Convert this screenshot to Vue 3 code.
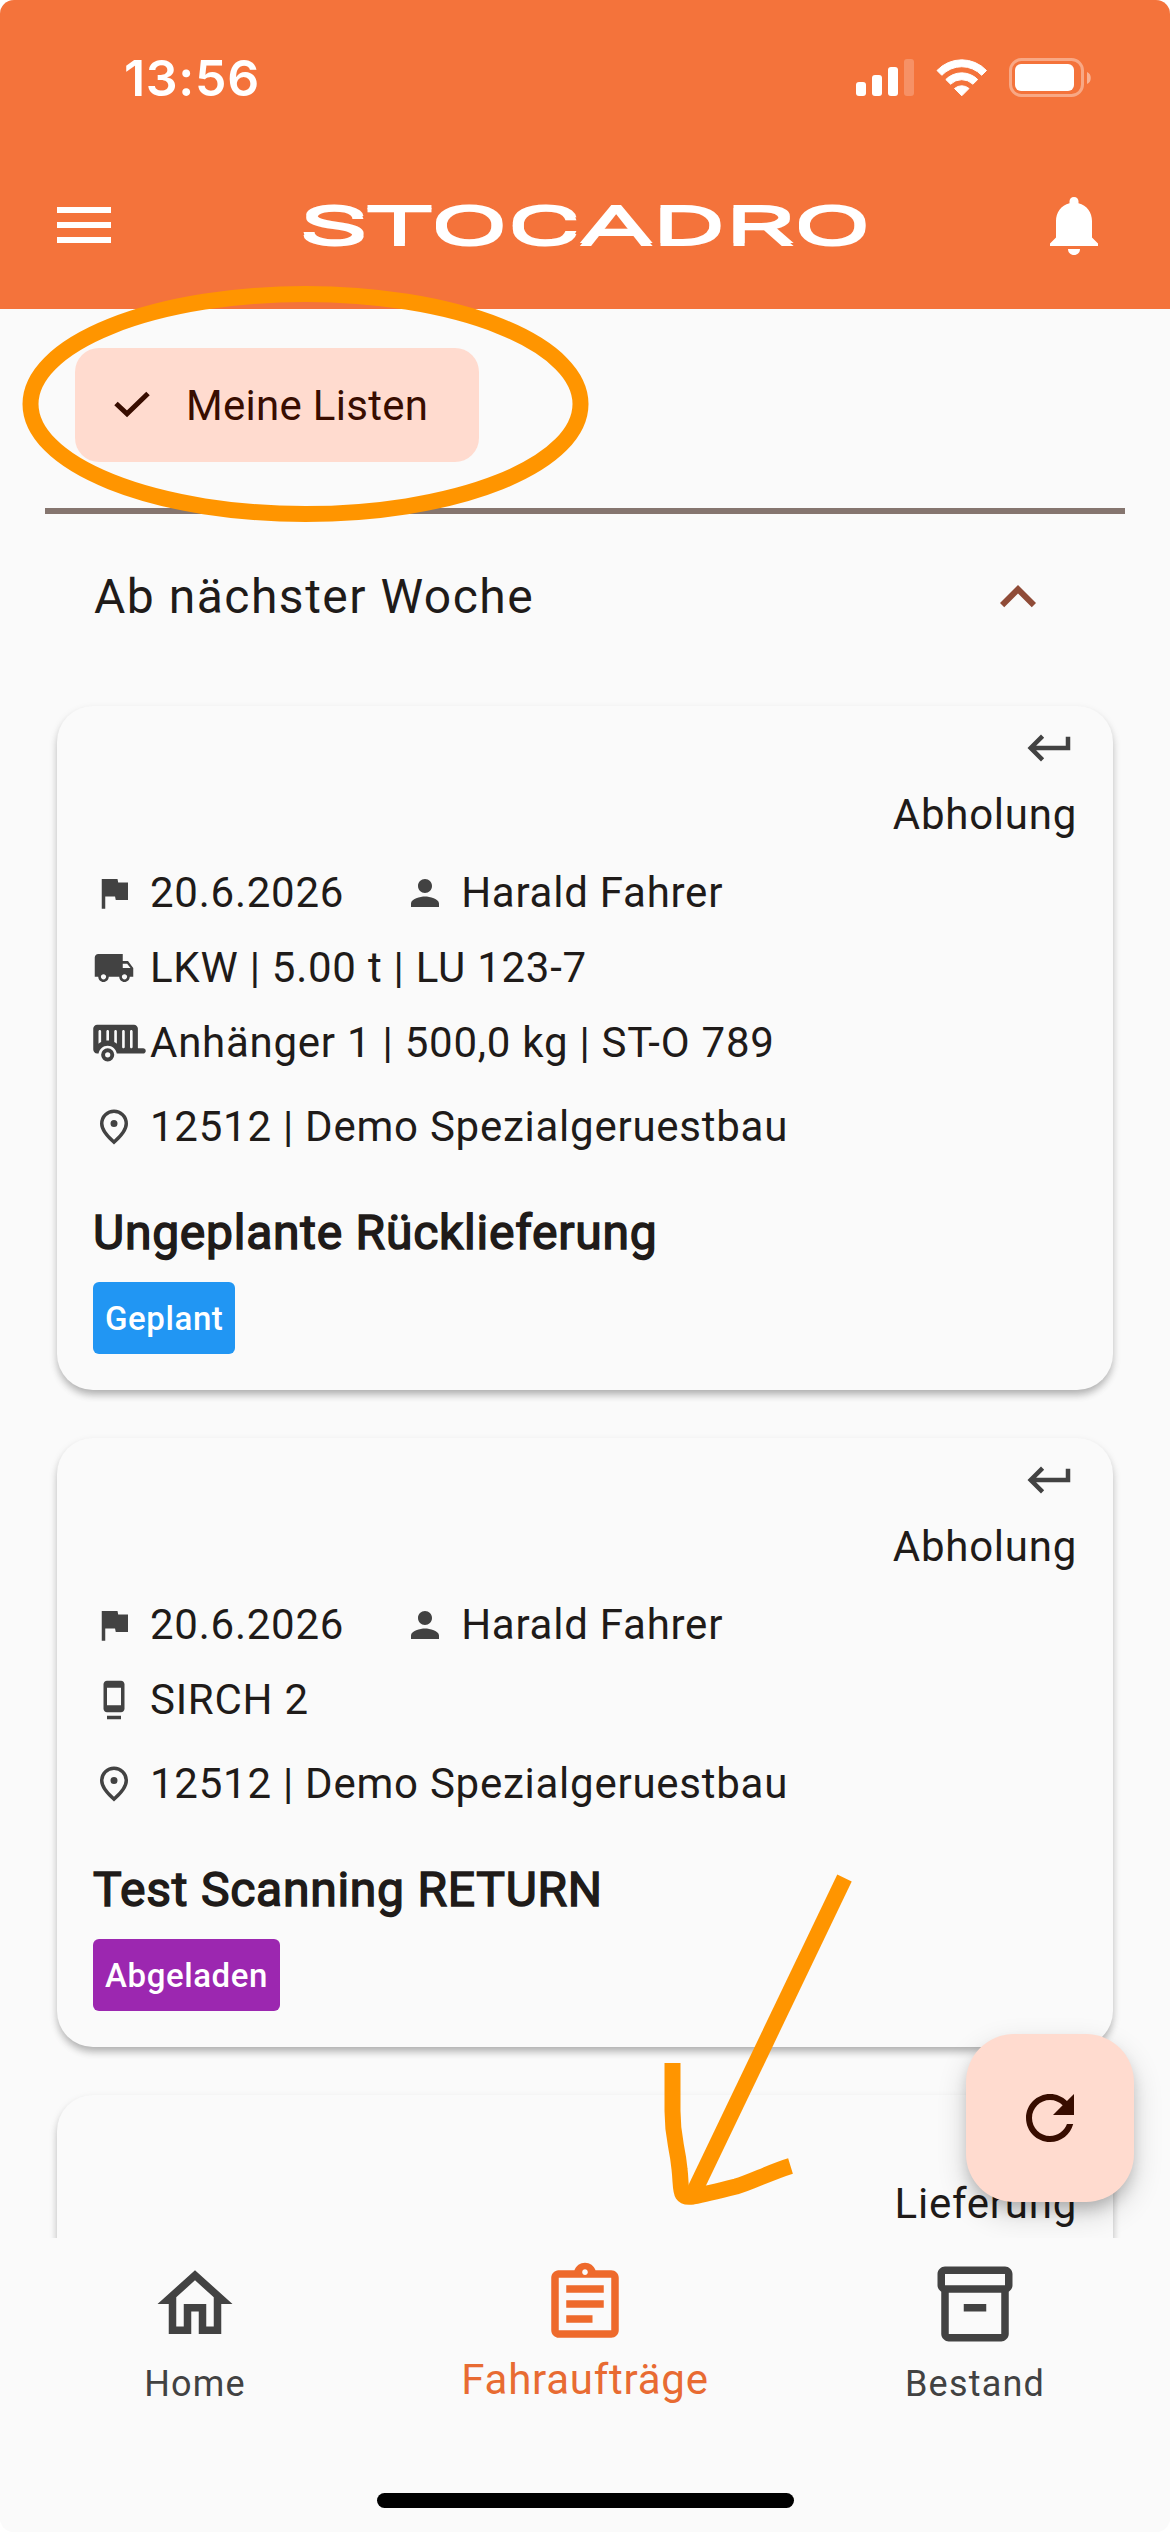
<template>
  <div class="screen">
    <header class="header">
      <div class="status-bar">
        <span class="clock">13:56</span>
        <svg class="status-icons" viewBox="0 0 238 42" width="238" height="42" fill="#fff">
          <rect x="1" y="25" width="10" height="14" rx="3" />
          <rect x="17" y="18" width="10" height="21" rx="3" />
          <rect x="33" y="10" width="10" height="29" rx="3" />
          <rect x="49" y="2" width="10" height="37" rx="3" opacity="0.22" />
          <path d="M82 13.500a34 34 0 0 1 49.500 0l-4.800 4.800a27.500 27.500 0 0 0-39.900 0z" stroke="#fff" stroke-width="1" stroke-linejoin="round" />
          <path d="M90.800 22.500a22.500 22.500 0 0 1 31.900 0l-4.800 4.700a16 16 0 0 0-22.300 0z" stroke="#fff" stroke-width="1" stroke-linejoin="round" />
          <path d="M99.500 31.500a11 11 0 0 1 14.500 0l-7.250 7.300z" stroke="#fff" stroke-width="1" stroke-linejoin="round" />
          <rect x="155.500" y="2.500" width="72" height="36" rx="11" fill="none" stroke="#fff" stroke-width="3" opacity="0.38" />
          <rect x="160" y="7" width="59" height="27" rx="6" />
          <path d="M232 15c5 1.500 5 10.500 0 12z" opacity="0.45" />
        </svg>
      </div>
      <div class="app-bar">
        <svg class="icon-lg" viewBox="0 0 24 24"><path d="M3 18h18v-2H3v2zm0-5h18v-2H3v2zm0-7v2h18V6H3z" /></svg>
        <svg class="logo" viewBox="0 0 563 60" width="563" height="60">
          <text x="-4" y="47.500" textLength="570" lengthAdjust="spacingAndGlyphs">STOCADRO</text>
        </svg>
        <svg class="icon-lg" viewBox="0 0 72 72">
          <path d="M36 8c-2.800 0-4.500 2-4.500 4.300v1.900C23 16.300 18 23.500 18 32v16.500L12 54.500V57h48v-2.500l-6-6V32c0-8.500-5-15.700-13.500-17.800v-1.900C40.500 10 38.800 8 36 8z" />
          <path d="M30 60h12c0 3.500-2.500 6-6 6s-6-2.500-6-6z" />
        </svg>
      </div>
    </header>

    <main class="content">
      <div class="filter">
        <div class="chip">
          <svg viewBox="0 0 36 28" width="36" height="28"><path d="M2 12.500l11 10.300L34 2.500" fill="none" stroke="#380d00" stroke-width="5" /></svg>
          <span>Meine Listen</span>
        </div>
      </div>
      <div class="section-title">
        <span>Ab nächster Woche</span>
        <svg viewBox="0 0 24 24" width="72" height="72"><path fill="#8f4b37" d="M12 8l-6 6 1.410 1.410L12 10.830l4.590 4.580L18 14z" /></svg>
      </div>

      <article v-for="order in orders" :key="order.id" class="card">
        <div class="card-type">
          <svg viewBox="0 0 24 24" width="54" height="54">
            <path v-if="order.type === 'Abholung'" :d="icons.back" />
          </svg>
          <span>{{ order.type }}</span>
        </div>
        <div class="row">
          <svg class="icon" viewBox="0 0 24 24"><path :d="icons.flag" /></svg>
          <span>{{ order.date }}</span>
          <svg class="icon driver" viewBox="0 0 24 24"><path :d="icons.person" /></svg>
          <span>{{ order.driver }}</span>
        </div>
        <div v-for="item in order.equipment" :key="item.text" class="row">
          <svg v-if="item.icon === 'trailer'" class="icon trailer" viewBox="0 0 640 512"><path :d="icons.trailer" /></svg>
          <svg v-else class="icon" viewBox="0 0 24 24"><path :d="icons[item.icon]" /></svg>
          <span>{{ item.text }}</span>
        </div>
        <div class="row place">
          <svg class="icon" viewBox="0 0 24 24"><path :d="icons.pin" /></svg>
          <span>{{ order.place }}</span>
        </div>
        <h2 class="card-title">{{ order.title }}</h2>
        <span class="badge" :class="order.status.toLowerCase()">{{ order.status }}</span>
      </article>

      <button class="fab">
        <svg viewBox="0 0 24 24" width="72" height="72"><path :d="icons.refresh" /></svg>
      </button>
    </main>

    <nav class="bottom-nav">
      <div class="tabs">
        <div v-for="tab in tabs" :key="tab.label" class="tab" :class="{ active: tab.active }">
          <svg viewBox="0 0 24 24" width="90" height="90"><path :d="icons[tab.icon]" /></svg>
          <span>{{ tab.label }}</span>
        </div>
      </div>
      <div class="home-indicator"></div>
    </nav>

    <!-- Markierungen über der Ansicht -->
    <svg class="marks" viewBox="0 0 1170 2532" width="1170" height="2532" fill="none" stroke="#ff9500" stroke-width="16">
      <ellipse cx="305.500" cy="404" rx="275" ry="110" />
      <path d="M844.500 1878L694 2192" />
      <path d="M672.500 2063V2111C672.500 2140 677 2143 679.500 2169C682 2190 678 2199 693 2196.500C706 2194 722 2190 736 2186.500C752 2182 768 2173 790.500 2166" />
    </svg>
  </div>
</template>

<script setup>
import { ref } from 'vue'

// Pfade der Icons (24x24, Anhänger 640x512)
const icons = {
  back: 'M19 7v4H5.830l3.580-3.590L8 6l-6 6 6 6 1.410-1.410L5.830 13H21V7z',
  flag: 'M14.400 6L14 4H5v17h2v-7h5.600l.4 2h7V6z',
  person: 'M12 12c2.210 0 4-1.790 4-4s-1.790-4-4-4-4 1.790-4 4 1.790 4 4 4zm0 2c-2.670 0-8 1.340-8 4v2h16v-2c0-2.660-5.330-4-8-4z',
  truck: 'M20 8h-3V4H3c-1.100 0-2 .9-2 2v11h2c0 1.660 1.340 3 3 3s3-1.340 3-3h6c0 1.660 1.340 3 3 3s3-1.340 3-3h2v-5l-3-4zM6 18.500c-.83 0-1.500-.67-1.500-1.500s.67-1.500 1.500-1.500 1.500.67 1.500 1.500-.67 1.500-1.500 1.500zm13.500-9l1.960 2.500H17V9.500h2.500zm-1.500 9c-.83 0-1.500-.67-1.500-1.500s.67-1.500 1.500-1.500 1.500.67 1.500 1.500-.67 1.500-1.500 1.500z',
  trailer: 'M48 32C21.500 32 0 53.500 0 80V336c0 26.500 21.500 48 48 48H65.100c7.800-54.300 54.400-96 110.900-96s103.100 41.700 110.900 96H608c17.700 0 32-14.300 32-32s-14.300-32-32-32H544V80c0-26.500-21.500-48-48-48H48zM80 96c8.800 0 16 7.200 16 16V243.200c-11.800 5.800-22.600 13.200-32 21.900V112c0-8.800 7.200-16 16-16zm96 0c8.800 0 16 7.200 16 16V224.700c-5.300-.5-10.600-.7-16-.7s-10.700 .2-16 .7V112c0-8.800 7.200-16 16-16zm80 16c0-8.800 7.200-16 16-16s16 7.200 16 16V265.100c-9.400-8.700-20.200-16.100-32-21.900V112zM368 96c8.800 0 16 7.200 16 16V304c0 8.800-7.200 16-16 16s-16-7.200-16-16V112c0-8.800 7.200-16 16-16zm112 16V304c0 8.800-7.200 16-16 16s-16-7.200-16-16V112c0-8.800 7.200-16 16-16s16 7.200 16 16zM176 480a80 80 0 1 0 0-160 80 80 0 1 0 0 160zm0-112a32 32 0 1 1 0 64 32 32 0 1 1 0-64z',
  dock: 'M8 23h8v-2H8v2zm8-21.990L8 1c-1.100 0-2 .9-2 2v14c0 1.100.9 2 2 2h8c1.100 0 2-.9 2-2V3c0-1.100-.9-1.990-2-1.990zM16 15H8V5h8v10z',
  pin: 'M12 12a2 2 0 1 0 0-4 2 2 0 0 0 0 4zM12 19.350q3.050-2.800 4.525-5.088T18 10.200q0-2.725-1.738-4.463T12 4 7.738 5.738 6 10.200q0 1.775 1.475 4.063T12 19.350zM12 22q-4.025-3.425-6.013-6.363T4 10.200q0-3.750 2.413-5.975T12 2t5.588 2.225T20 10.200q0 2.500-1.988 5.438T12 22z',
  refresh: 'M17.650 6.350C16.200 4.900 14.210 4 12 4c-4.420 0-7.990 3.580-7.990 8s3.570 8 7.990 8c3.730 0 6.840-2.550 7.730-6h-2.080c-.82 2.330-3.040 4-5.650 4-3.310 0-6-2.690-6-6s2.690-6 6-6c1.660 0 3.140.69 4.220 1.780L13 11h7V4l-2.350 2.350z',
  home: 'M12 5.690l5 4.500V18h-2v-6H9v6H7v-7.810l5-4.500M12 3L2 12h3v8h6v-6h2v6h6v-8h3L12 3z',
  assignment: 'M7 15h7v2H7zm0-4h10v2H7zm0-4h10v2H7zm12-4h-4.180C14.400 1.840 13.300 1 12 1c-1.300 0-2.400.84-2.820 2H5c-.14 0-.27.01-.4.04-.39.08-.74.28-1.010.55-.18.18-.33.4-.43.64-.1.23-.16.49-.16.77v14c0 .27.06.54.16.78s.25.45.43.64c.27.27.62.47 1.010.55.13.02.26.03.4.03h14c1.100 0 2-.9 2-2V5c0-1.100-.9-2-2-2zm-7-.25c.41 0 .75.34.75.75s-.34.75-.75.75-.75-.34-.75-.75.34-.75.75-.75zM19 19H5V5h14v14z',
  inventory: 'M20 2H4c-1 0-2 .9-2 2v3.010c0 .72.43 1.340 1 1.690V20c0 1.100 1.100 2 2 2h14c.9 0 2-.9 2-2V8.700c.57-.35 1-.97 1-1.690V4c0-1.100-1-2-2-2zm-1 18H5V9h14v11zm1-13H4V4h16v3zM9 12h6v2H9z'
}

const orders = ref([
  {
    id: 1,
    type: 'Abholung',
    date: '20.6.2026',
    driver: 'Harald Fahrer',
    equipment: [
      { icon: 'truck', text: 'LKW | 5.00 t | LU 123-7' },
      { icon: 'trailer', text: 'Anhänger 1 | 500,0 kg | ST-O 789' }
    ],
    place: '12512 | Demo Spezialgeruestbau',
    title: 'Ungeplante Rücklieferung',
    status: 'Geplant'
  },
  {
    id: 2,
    type: 'Abholung',
    date: '20.6.2026',
    driver: 'Harald Fahrer',
    equipment: [{ icon: 'dock', text: 'SIRCH 2' }],
    place: '12512 | Demo Spezialgeruestbau',
    title: 'Test Scanning RETURN',
    status: 'Abgeladen'
  },
  {
    id: 3,
    type: 'Lieferung',
    date: '',
    driver: '',
    equipment: [],
    place: '',
    title: '',
    status: ''
  }
])

const tabs = [
  { label: 'Home', icon: 'home', active: false },
  { label: 'Fahraufträge', icon: 'assignment', active: true },
  { label: 'Bestand', icon: 'inventory', active: false }
]
</script>

<style>
body {
  margin: 0;
  background-color: #fff;
}
</style>

<style scoped>
.screen {
  position: relative;
  display: flex;
  flex-direction: column;
  width: 1170px;
  height: 2532px;
  overflow: hidden;
  border-radius: 14px;
  background-color: #fafafa;
  color: #1f1b19;
  font-family: Roboto, sans-serif;
  font-size: 42px;
  line-height: 60px;
  letter-spacing: 0.75px;
}

svg {
  display: block;
  flex: none;
}

/* Kopfbereich */
.header {
  flex: none;
  height: 309px;
  background-color: #f4733b;
  color: #fff;
}

.status-bar {
  display: flex;
  justify-content: space-between;
  align-items: center;
  box-sizing: border-box;
  height: 141px;
  padding: 15px 77px 0 124px;
}

.clock {
  font-family: Inter, sans-serif;
  font-size: 50px;
  font-weight: 600;
  letter-spacing: 0.7px;
}

.app-bar {
  display: flex;
  justify-content: space-between;
  align-items: center;
  height: 168px;
  padding: 0 60px 0 48px;
}

.icon-lg {
  width: 72px;
  height: 72px;
  fill: #fff;
}

/* Breite Wortmarke, der Schatten gleicht die dünnen Querstriche aus */
.logo {
  margin-left: 11px;
  overflow: visible;
  filter: drop-shadow(0 3.5px 0 #fff);
}

.logo text {
  fill: #fff;
  font-family: Roboto, sans-serif;
  font-weight: 400;
  font-size: 54px;
  letter-spacing: -1.5px;
}

/* Inhalt */
.content {
  position: relative;
  flex: none;
  height: 1929px;
  overflow: hidden;
}

.filter {
  box-sizing: border-box;
  height: 205px;
  margin: 0 45px;
  padding: 39px 30px 0;
  border-bottom: 6px solid #85756f;
}

.chip {
  display: flex;
  align-items: center;
  box-sizing: border-box;
  width: 404px;
  height: 114px;
  padding: 0 39px;
  gap: 36px;
  border-radius: 24px;
  background-color: #ffdbcf;
  color: #380d00;
  letter-spacing: 0.3px;
}

.chip span {
  padding-top: 2px;
}

.section-title {
  display: flex;
  justify-content: space-between;
  align-items: center;
  height: 72px;
  margin: 47px 116px 73px 94px;
  font-size: 48px;
  line-height: 72px;
  letter-spacing: 1.5px;
}

.card {
  display: flex;
  flex-direction: column;
  margin: 0 57px 48px;
  padding: 15px 36px 36px;
  border-radius: 36px;
  background-color: #fafafa;
  box-shadow: 0 6px 8px -2px rgba(0, 0, 0, 0.2), 0 4px 9px rgba(0, 0, 0, 0.15);
}

.card-type {
  display: flex;
  flex-direction: column;
  align-items: flex-end;
  gap: 10px;
  margin-bottom: 3px;
}

.card-type svg {
  fill: #424242;
}

.row {
  display: flex;
  align-items: center;
  gap: 15px;
  height: 60px;
  margin-top: 15px;
}

.icon {
  width: 42px;
  height: 42px;
  fill: #424242;
}

.trailer {
  width: 53px;
  margin-right: -11px;
}

.driver {
  margin-left: 45px;
}

.place {
  margin-top: 24px;
}

.card-title {
  margin: 40px 0 13px;
  font-size: 48px;
  font-weight: 400;
  line-height: 72px;
  letter-spacing: 0.75px;
  -webkit-text-stroke: 1.5px currentColor;
}

.badge {
  align-self: flex-start;
  padding: 1px 12px 0;
  border-radius: 6px;
  color: #fff;
  font-size: 33px;
  font-weight: 500;
  line-height: 71px;
  letter-spacing: 0.6px;
}

.badge.geplant {
  background-color: #2196f3;
}

.badge.abgeladen {
  background-color: #9c27b0;
}

.fab {
  position: absolute;
  right: 36px;
  bottom: 36px;
  width: 168px;
  height: 168px;
  padding: 48px;
  border: none;
  border-radius: 48px;
  background-color: #ffdbcf;
  box-shadow: 0 9px 15px -3px rgba(0, 0, 0, 0.2), 0 12px 30px rgba(0, 0, 0, 0.16);
}

.fab svg {
  fill: #380d00;
}

/* Untere Navigation */
.bottom-nav {
  position: relative;
  flex: 1;
  display: flex;
  flex-direction: column;
  justify-content: space-between;
  align-items: center;
  padding: 21px 0 24px;
  background-color: #fafafa;
}

.tabs {
  display: flex;
  width: 100%;
}

.tab {
  flex: 1;
  display: flex;
  flex-direction: column;
  align-items: center;
  gap: 1px;
  color: #424242;
  fill: #424242;
  font-size: 36px;
  line-height: 68px;
  letter-spacing: 1.2px;
}

.tab.active {
  color: #e86b32;
  fill: #ee6a2c;
  font-size: 42px;
  line-height: 60px;
  letter-spacing: 0.75px;
}

.home-indicator {
  width: 417px;
  height: 15px;
  border-radius: 8px;
  background-color: #000;
}

.marks {
  position: absolute;
  top: 0;
  left: 0;
  pointer-events: none;
}
</style>
